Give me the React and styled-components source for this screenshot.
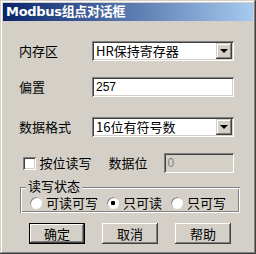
import React from 'react';
import styled, { createGlobalStyle } from 'styled-components';

const Global = createGlobalStyle`
  html, body {
    margin: 0;
    padding: 0;
    background: #d4d0c8;
  }
  * { box-sizing: border-box; }
`;

const Window = styled.div`
  width: 256px;
  height: 254px;
  background: #d4d0c8;
  padding: 3px;
  font-family: "Noto Sans CJK SC", "Liberation Sans", sans-serif;
  font-size: 13px;
  color: #000;
  box-shadow: inset -1px -1px #404040, inset 1px 1px #d4d0c8,
    inset -2px -2px #808080, inset 2px 2px #ffffff;
  display: flex;
  flex-direction: column;
`;

const TitleBar = styled.div`
  height: 18px;
  background: linear-gradient(to right, #0a246a, #a6caf0);
  color: #fff;
  font-weight: bold;
  font-size: 13px;
  line-height: 18px;
  padding-left: 3px;
  font-family: "DejaVu Sans", "Noto Sans CJK SC", sans-serif;
  letter-spacing: -0.3px;
`;

const Body = styled.div`
  padding: 20px 19px 0 16px;
  display: flex;
  flex-direction: column;
`;

const Row = styled.div`
  display: flex;
  align-items: center;
  height: 20px;
  margin-bottom: ${p => p.mb || 0}px;
`;

const Label = styled.span`
  width: ${p => p.w || 73}px;
  flex-shrink: 0;
  white-space: nowrap;
  line-height: 14px;
`;

const sunken = `
  box-shadow: inset 1px 1px #808080, inset -1px -1px #ffffff,
    inset 2px 2px #404040, inset -2px -2px #d4d0c8;
`;

const Field = styled.div`
  width: ${p => p.w || 144}px;
  height: 20px;
  background: ${p => (p.disabled ? '#d4d0c8' : '#fff')};
  color: ${p => (p.disabled ? '#808080' : '#000')};
  ${sunken}
  display: flex;
  align-items: center;
  padding: 0 2px 0 4px;
  font-family: ${p => (p.mono ? '"Liberation Sans", sans-serif' : 'inherit')};
  font-size: ${p => (p.mono ? 12 : 13)}px;
  line-height: 14px;
`;

const FieldText = styled.span`
  flex: 1;
`;

const DropButton = styled.div`
  width: 16px;
  height: 16px;
  background: #d4d0c8;
  box-shadow: inset -1px -1px #404040, inset 1px 1px #d4d0c8,
    inset -2px -2px #808080, inset 2px 2px #ffffff;
  display: flex;
  align-items: center;
  justify-content: center;
  &::after {
    content: "";
    border-left: 4px solid transparent;
    border-right: 4px solid transparent;
    border-top: 4px solid #000;
  }
`;

const CheckBox = styled.span`
  width: 13px;
  height: 13px;
  background: #fff;
  ${sunken}
  margin: 0 4px 0 4px;
`;

const Group = styled.div`
  margin: 0 0 0 1px;
  padding: 6px 0 0 9px;
  width: 220px;
  height: 26px;
  box-shadow: inset 1px 1px #808080, inset -1px -1px #ffffff,
    inset 2px 2px #ffffff, inset -2px -2px #808080;
  position: relative;
  display: flex;
  align-items: center;
`;

const Legend = styled.span`
  position: absolute;
  top: -8px;
  left: 6px;
  background: #d4d0c8;
  padding: 0 2px;
  line-height: 14px;
`;

const Radio = styled.span`
  display: inline-flex;
  align-items: center;
  flex-shrink: 0;
  white-space: nowrap;
  margin-right: 8px;
  line-height: 14px;
  &::before {
    content: "";
    flex-shrink: 0;
    width: 12px;
    height: 12px;
    border-radius: 50%;
    margin-right: 3px;
    background: ${p => (p.checked ? 'radial-gradient(circle, #000 0 2px, #fff 2.5px)' : '#fff')};
    box-shadow: inset 1px 1px #808080, inset -1px -1px #ffffff;
    border: 1px solid #d4d0c8;
  }
`;

const Buttons = styled.div`
  display: flex;
  padding-left: 10px;
  gap: 17px;
  margin-top: 10px;
`;

const Button = styled.div`
  width: 56px;
  height: 21px;
  display: flex;
  align-items: center;
  justify-content: center;
  background: #d4d0c8;
  box-shadow: inset -1px -1px #404040, inset 1px 1px #ffffff,
    inset -2px -2px #808080;
  ${p => p.primary && `
    box-shadow: inset 1px 1px #000, inset -1px -1px #000,
      inset -2px -2px #404040, inset 2px 2px #ffffff, inset -3px -3px #808080;
  `}
`;

export default function App() {
  return (
    <>
      <Global />
      <Window>
        <TitleBar>Modbus组点对话框</TitleBar>
        <Body>
          <Row mb={16}>
            <Label>内存区</Label>
            <Field>
              <FieldText>HR保持寄存器</FieldText>
              <DropButton />
            </Field>
          </Row>
          <Row mb={20}>
            <Label>偏置</Label>
            <Field w={145} mono>
              <FieldText>257</FieldText>
            </Field>
          </Row>
          <Row mb={16}>
            <Label>数据格式</Label>
            <Field>
              <FieldText>16位有符号数</FieldText>
              <DropButton />
            </Field>
          </Row>
          <Row mb={14}>
            <CheckBox />
            <Label w={69}>按位读写</Label>
            <Label w={55}>数据位</Label>
            <Field w={73} disabled mono>
              <FieldText>0</FieldText>
            </Field>
          </Row>
          <Group>
            <Legend>读写状态</Legend>
            <Radio>可读可写</Radio>
            <Radio checked>只可读</Radio>
            <Radio>只可写</Radio>
          </Group>
          <Buttons>
            <Button primary>确定</Button>
            <Button>取消</Button>
            <Button>帮助</Button>
          </Buttons>
        </Body>
      </Window>
    </>
  );
}
